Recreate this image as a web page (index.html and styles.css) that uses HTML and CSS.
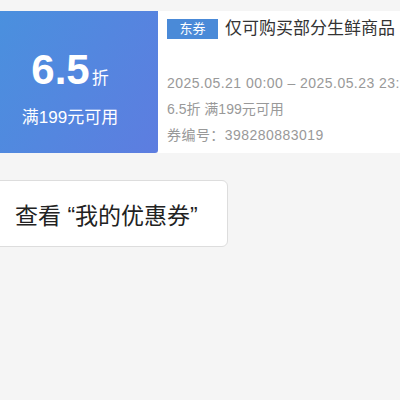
FILE: index.html
```html
<!DOCTYPE html>
<html lang="zh-CN">
<head>
    <meta charset="UTF-8">
    <meta name="viewport" content="width=device-width, initial-scale=1.0">
    <title>优惠券</title>
    <link rel="stylesheet" href="styles.css">
</head>
<body>
    <div class="page">
        <div class="coupon">
            <div class="coupon-left">
                <div class="coupon-value">6.5<span class="unit">折</span></div>
                <div class="coupon-cond">满199元可用</div>
            </div>
            <div class="coupon-right">
                <div class="coupon-head">
                    <span class="tag">东券</span>
                    <span class="title">仅可购买部分生鲜商品</span>
                </div>
                <div class="coupon-info">
                    <div class="line wide">2025.05.21 00:00 – 2025.05.23 23:59</div>
                    <div class="line">6.5折 满199元可用</div>
                    <div class="line wide">券编号：398280883019</div>
                </div>
            </div>
        </div>

        <button class="view-btn">查看 “我的优惠券”</button>
    </div>
</body>
</html>
```

FILE: styles.css
```css
body, html {
    margin: 0;
    padding: 0;
    height: 100%;
    background-color: #f5f5f5;
    font-family: "Liberation Sans", "Noto Sans CJK SC", sans-serif;
    overflow: hidden;
}
.page {
    padding-top: 11px;
}
.coupon {
    display: flex;
    width: 440px;
    height: 142px;
}
.coupon-left {
    width: 158px;
    flex-shrink: 0;
    display: flex;
    flex-direction: column;
    align-items: center;
    padding: 38px 18px 0 0;
    box-sizing: border-box;
    color: white;
    background: linear-gradient(120deg, #4a90de 0%, #5d7de0 100%);
    border-bottom-right-radius: 3px;
}
.coupon-value {
    font-size: 42px;
    font-weight: bold;
    line-height: 42px;
}
.unit {
    font-size: 17px;
    font-weight: normal;
    margin-left: 2px;
}
.coupon-cond {
    margin-top: 8px;
    font-size: 17px;
    line-height: 20px;
}
.coupon-right {
    flex: 1;
    background: white;
    padding: 8px 0 0 9px;
    overflow: hidden;
}
.coupon-head {
    display: flex;
    align-items: center;
    gap: 7px;
    height: 20px;
}
.tag {
    width: 51px;
    height: 20px;
    line-height: 20px;
    text-align: center;
    font-size: 13px;
    color: white;
    background-color: #4a8ad8;
}
.title {
    font-size: 17px;
    line-height: 20px;
    color: #333;
    white-space: nowrap;
}
.coupon-info {
    margin-top: 31px;
}
.line {
    font-size: 14px;
    line-height: 26px;
    color: #999;
    white-space: nowrap;
}
.line.wide {
    letter-spacing: 0.45px;
}
.view-btn {
    display: block;
    margin: 27px 0 0 -6px;
    width: 234px;
    height: 67px;
    padding: 0 0 0 20px;
    box-sizing: border-box;
    text-align: left;
    font-family: "Liberation Sans", "Noto Sans CJK SC", sans-serif;
    font-size: 23px;
    color: #222;
    background: white;
    border: 1px solid #ddd;
    border-radius: 6px;
}
```
